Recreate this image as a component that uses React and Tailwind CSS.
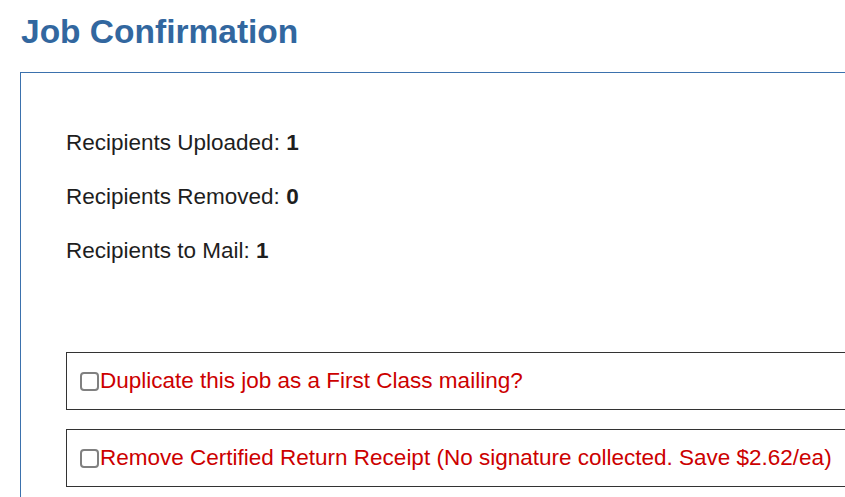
import { useState } from "react";

function Stat({ label, value }) {
  return (
    <div className="h-[54px] leading-[54px]">
      {label} <span className="font-bold">{value}</span>
    </div>
  );
}

function OptionBox({ label, checked, onChange }) {
  return (
    <label className="flex items-center h-[58px] w-[900px] border border-[#333333] pl-[13px] text-[#cc0000] cursor-pointer">
      <input
        type="checkbox"
        checked={checked}
        onChange={onChange}
        className="appearance-none shrink-0 w-[19px] h-[19px] border-2 border-[#808080] rounded-[4px] bg-white mr-[1px] checked:bg-[#0075ff] checked:border-[#0075ff]"
      />
      <span className="leading-none">{label}</span>
    </label>
  );
}

export default function App() {
  const [duplicate, setDuplicate] = useState(false);
  const [removeReceipt, setRemoveReceipt] = useState(false);

  return (
    <div className="w-[845px] h-[497px] overflow-hidden bg-white font-['Liberation_Sans',Arial,sans-serif]">
      <h1 className="ml-[21px] pt-[15px] text-[33.5px] leading-none font-bold text-[#32679f]">
        Job Confirmation
      </h1>
      <div className="ml-[20px] mt-[23.5px] w-[1000px] h-[600px] border border-[#3b71ad] pl-[45px] pt-[42.5px] text-[22.5px] text-[#1e1e1e]">
        <Stat label="Recipients Uploaded:" value="1" />
        <Stat label="Recipients Removed:" value="0" />
        <Stat label="Recipients to Mail:" value="1" />

        <div className="mt-[74.5px] flex flex-col gap-[19px]">
          <OptionBox
            label="Duplicate this job as a First Class mailing?"
            checked={duplicate}
            onChange={() => setDuplicate(!duplicate)}
          />
          <OptionBox
            label="Remove Certified Return Receipt (No signature collected. Save $2.62/ea)"
            checked={removeReceipt}
            onChange={() => setRemoveReceipt(!removeReceipt)}
          />
        </div>
      </div>
    </div>
  );
}
